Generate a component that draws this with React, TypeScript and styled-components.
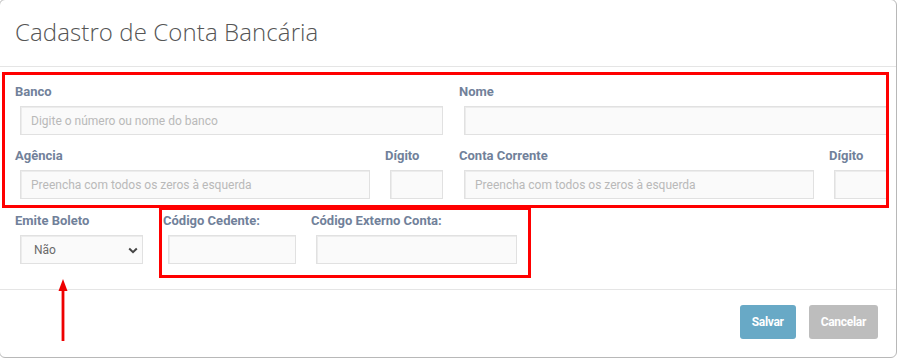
import { FC } from "react";
import styled, { createGlobalStyle } from "styled-components";

const GlobalStyle = createGlobalStyle`
    html, body {
        margin:0;
        padding:0;
        background:#fff;
        overflow:hidden;
    }
    body {
        font-family: Roboto, "Liberation Sans", Arial, sans-serif;
    }
`
const Modal = styled.div`
    position: relative;
    margin:-1px 0 0 -1px;
    width:898px;
    height:359px;
    background:#fff;
    border:1px solid #b8b8b8;
    border-radius:6px;
    box-sizing: border-box;
    display:flex;
    flex-direction: column;
`
const Header = styled.div`
    height:67px;
    border-bottom:1px solid #e5e5e5;
    display:flex;
    align-items: center;
    padding:0 15px 0 15px;
    box-sizing: border-box;
`
const Title = styled.h4`
    margin:0;
    font-family: "Open Sans", sans-serif;
    font-weight:300;
    font-size:24px;
    letter-spacing:0.1px;
    color:#555;
    padding-bottom:4px;
`
const HighlightBox = styled.div`
    border:3px solid #f00;
    box-sizing: border-box;
`
const MainBox = styled(HighlightBox)`
    margin:5px 0 0 2px;
    width:887px;
    padding:8px 0 6px 10px;
    overflow:hidden;
    display:flex;
    flex-direction: column;
    gap:12px;
`
const FieldRow = styled.div<{ $cols: string }>`
    display:grid;
    grid-template-columns: ${p => p.$cols};
`
const Field = styled.div<{ $width?: number }>`
    display:flex;
    flex-direction: column;
    width:${p => p.$width ? `${p.$width}px` : "auto"};
`
const Label = styled.label`
    font-size:13px;
    font-weight:bold;
    color:#71819a;
    line-height:17px;
    margin-bottom:6px;
    white-space:nowrap;
`
const Input = styled.input<{ $width?: number }>`
    margin-left:5px;
    width:${p => p.$width ? `${p.$width}px` : "calc(100% - 6px)"};
    height:29px;
    box-sizing: border-box;
    background:#fafafa;
    border:1px solid #e1e1e1;
    box-shadow: inset 1px 1px 0 #ececec;
    padding:0 10px;
    font-family: Roboto, sans-serif;
    font-size:12px;
    color:#555;
    outline:none;
    &::placeholder {
        color:#b9b9b9;
    }
`
const BottomRow = styled.div`
    display:flex;
    align-items: flex-start;
    margin-top:-1px;
    padding-left:15px;
`
const SelectWrap = styled.div`
    position: relative;
    margin-left:5px;
    width:123px;
    height:29px;
`
const Select = styled.select`
    appearance: none;
    width:100%;
    height:100%;
    box-sizing: border-box;
    background:#fafafa;
    border:1px solid #e1e1e1;
    box-shadow: inset 1px 1px 0 #ececec;
    padding:0 0 0 13px;
    font-family: Roboto, sans-serif;
    font-size:12px;
    color:#6a6a6a;
    outline:none;
`
const Chevron = styled.svg`
    position:absolute;
    right:5px;
    top:12px;
    pointer-events:none;
`
const EmiteField = styled(Field)`
    padding-top:5px;
`
const CodeBox = styled(HighlightBox)`
    margin-left:16px;
    display:flex;
    gap:15px;
    padding:2px 11px 11px 1px;
`
const Arrow = styled.svg`
    position:absolute;
    left:57px;
    top:277px;
`
const Footer = styled.div`
    margin-top:11px;
    border-top:1px solid #e5e5e5;
    display:flex;
    justify-content: flex-end;
    gap:13px;
    padding:15px 18px 0 0;
`
const Button = styled.button<{ $variant: "primary" | "muted" }>`
    height:34px;
    padding:0 12px;
    border:none;
    border-radius:3px;
    background:${p => p.$variant === "primary" ? "#68a9c6" : "#bdbdbd"};
    color:#fff;
    font-family: Roboto, sans-serif;
    font-weight:bold;
    font-size:12px;
    letter-spacing:-0.3px;
`

const App: FC = () => {
    return (
        <>
            <GlobalStyle />
            <Modal>
                <Header>
                    <Title>Cadastro de Conta Bancária</Title>
                </Header>
                <MainBox>
                    <FieldRow $cols="444px 444px">
                        <Field>
                            <Label>Banco</Label>
                            <Input $width={423} placeholder="Digite o número ou nome do banco" />
                        </Field>
                        <Field>
                            <Label>Nome</Label>
                            <Input $width={423} />
                        </Field>
                    </FieldRow>
                    <FieldRow $cols="370px 74px 370px 74px">
                        <Field>
                            <Label>Agência</Label>
                            <Input $width={350} placeholder="Preencha com todos os zeros à esquerda" />
                        </Field>
                        <Field>
                            <Label>Dígito</Label>
                            <Input $width={53} />
                        </Field>
                        <Field>
                            <Label>Conta Corrente</Label>
                            <Input $width={350} placeholder="Preencha com todos os zeros à esquerda" />
                        </Field>
                        <Field>
                            <Label>Dígito</Label>
                            <Input $width={53} />
                        </Field>
                    </FieldRow>
                </MainBox>
                <BottomRow>
                    <EmiteField>
                        <Label>Emite Boleto</Label>
                        <SelectWrap>
                            <Select defaultValue="nao">
                                <option value="nao">Não</option>
                                <option value="sim">Sim</option>
                            </Select>
                            <Chevron width="10" height="7" viewBox="0 0 10 7">
                                <path d="M1.2 1.5 L5 5.2 L8.8 1.5" fill="none" stroke="#444" strokeWidth="2" />
                            </Chevron>
                        </SelectWrap>
                    </EmiteField>
                    <CodeBox>
                        <Field $width={133}>
                            <Label>Código Cedente:</Label>
                            <Input $width={128} />
                        </Field>
                        <Field $width={206}>
                            <Label>Código Externo Conta:</Label>
                            <Input $width={201} />
                        </Field>
                    </CodeBox>
                </BottomRow>
                <Footer>
                    <Button $variant="primary">Salvar</Button>
                    <Button $variant="muted">Cancelar</Button>
                </Footer>
                <Arrow width="12" height="66" viewBox="0 0 12 66">
                    <polygon points="6,2 10.5,14 1.5,14" fill="#e00" />
                    <rect x="4.6" y="12" width="2.8" height="52" fill="#e00" />
                </Arrow>
            </Modal>
        </>
    )
}
export default App
